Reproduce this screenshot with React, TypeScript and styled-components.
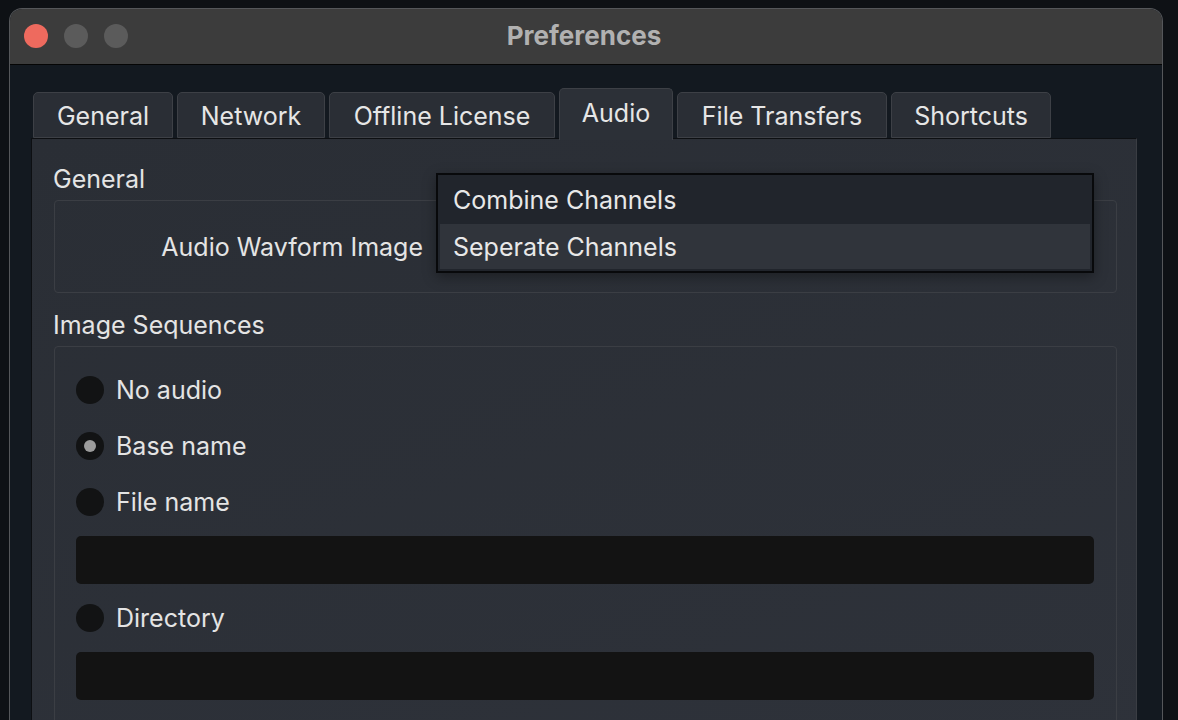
import styled, { createGlobalStyle } from "styled-components";

const GlobalStyle = createGlobalStyle`
  html, body {
    margin: 0;
    padding: 0;
    background: #0e1115;
    overflow: hidden;
  }
  body {
    font-family: Inter, "Liberation Sans", Arial, sans-serif;
    color: #e4e4e4;
  }
`;

const Window = styled.div`
  margin: 8px 0 0 9px;
  width: 1152px;
  height: 740px;
  border: 1px solid #55575a;
  border-bottom: none;
  border-radius: 13px 13px 0 0;
  background: #131920;
  overflow: hidden;
  display: flex;
  flex-direction: column;
`;

const TitleBar = styled.div`
  position: relative;
  height: 55px;
  flex: none;
  background: #3c3c3c;
  border-bottom: 1px solid #050505;
  display: flex;
  align-items: center;
  justify-content: center;
`;

const Lights = styled.div`
  position: absolute;
  left: 14px;
  top: 15px;
  display: flex;
  gap: 16px;
`;

const Light = styled.span<{ $color: string }>`
  width: 24px;
  height: 24px;
  border-radius: 50%;
  background: ${(p) => p.$color};
`;

const Title = styled.div`
  font-size: 26px;
  font-weight: 700;
  color: #b1b1b1;
  margin-left: -4px;
  margin-top: -3px;
`;

const Body = styled.div`
  padding: 23px 0 0 21px;
  display: flex;
  flex-direction: column;
`;

const TabBar = styled.div`
  display: flex;
  align-items: flex-end;
  gap: 4px;
  padding-left: 2px;
  position: relative;
  z-index: 1;
`;

const Tab = styled.div<{ $active?: boolean; $w: number }>`
  height: ${(p) => (p.$active ? 52 : 46)}px;
  margin-bottom: ${(p) => (p.$active ? -2 : 0)}px;
  width: ${(p) => p.$w}px;
  box-sizing: border-box;
  display: flex;
  align-items: center;
  justify-content: center;
  padding-top: ${(p) => (p.$active ? 0 : 2)}px;
  padding-bottom: ${(p) => (p.$active ? 4 : 0)}px;
  font-size: 25px;
  color: #e6e6e6;
  background: ${(p) => (p.$active ? "#2c3037" : "#2a2e35")};
  border: 1px solid #3d4046;
  border-bottom: ${(p) => (p.$active ? "none" : "1px solid #3d4046")};
  border-radius: 5px 5px 0 0;
`;

const Pane = styled.div`
  width: 1106px;
  height: 620px;
  box-sizing: border-box;
  background: linear-gradient(160deg, #2a2e35 0%, #2e323a 100%);
  border: 1px solid #0d0f12;
  border-right-color: #3a3d43;
  padding: 24px 19px 0 21px;
  display: flex;
  flex-direction: column;
`;

const SectionLabel = styled.div`
  font-size: 25px;
  line-height: 32px;
  color: #e4e4e4;
  margin-bottom: 5px;
`;

const Group = styled.div<{ $h?: number }>`
  position: relative;
  margin-left: 1px;
  height: ${(p) => (p.$h ? `${p.$h}px` : "auto")};
  box-sizing: border-box;
  border: 1px solid #3b3e44;
  border-radius: 4px;
  margin-bottom: 16px;
`;

const FormRow = styled.div`
  height: 100%;
  display: flex;
  align-items: center;
`;

const FieldLabel = styled.div`
  width: 368px;
  text-align: right;
  font-size: 25px;
  color: #e4e4e4;
`;

const Popup = styled.div`
  position: absolute;
  left: 381px;
  top: -28px;
  width: 658px;
  height: 100px;
  box-sizing: border-box;
  background: #21252c;
  border: 2px solid #08090b;
  padding: 2px;
  display: flex;
  flex-direction: column;
  gap: 2px;
  box-shadow: 0 4px 12px rgba(0, 0, 0, 0.35);
`;

const Option = styled.div<{ $hover?: boolean }>`
  flex: 1;
  display: flex;
  align-items: center;
  padding-left: 13px;
  font-size: 25px;
  color: #e8e8e8;
  background: ${(p) => (p.$hover ? "#30343b" : "#21252c")};
`;

const Options = styled.div`
  padding: 29px 22px 40px 21px;
  display: flex;
  flex-direction: column;
  gap: 20px;
`;

const RadioRow = styled.label`
  height: 28px;
  display: flex;
  align-items: center;
  gap: 12px;
  font-size: 25px;
  color: #e4e4e4;
  & + & {
    margin-top: 8px;
  }
`;

const Radio = styled.span<{ $checked?: boolean }>`
  width: 28px;
  height: 28px;
  flex: none;
  border-radius: 50%;
  background: #121314;
  display: flex;
  align-items: center;
  justify-content: center;
  &::after {
    content: "";
    width: 12px;
    height: 12px;
    border-radius: 50%;
    background: #9c9c9c;
    display: ${(p) => (p.$checked ? "block" : "none")};
  }
`;

const TextInput = styled.div`
  height: 48px;
  background: #131313;
  border-radius: 5px;
`;

const tabs = [
  { name: "General", w: 140 },
  { name: "Network", w: 148 },
  { name: "Offline License", w: 226 },
  { name: "Audio", w: 114, active: true },
  { name: "File Transfers", w: 210 },
  { name: "Shortcuts", w: 160 },
];

export default function App() {
  return (
    <>
      <GlobalStyle />
      <Window>
        <TitleBar>
          <Lights>
            <Light $color="#ee6a5e" />
            <Light $color="#5b5b5b" />
            <Light $color="#5b5b5b" />
          </Lights>
          <Title>Preferences</Title>
        </TitleBar>
        <Body>
          <TabBar>
            {tabs.map((t) => (
              <Tab key={t.name} $w={t.w} $active={t.active}>
                {t.name}
              </Tab>
            ))}
          </TabBar>
          <Pane>
            <SectionLabel>General</SectionLabel>
            <Group $h={93}>
              <FormRow>
                <FieldLabel>Audio Wavform Image</FieldLabel>
              </FormRow>
              <Popup>
                <Option>Combine Channels</Option>
                <Option $hover>Seperate Channels</Option>
              </Popup>
            </Group>
            <SectionLabel>Image Sequences</SectionLabel>
            <Group>
              <Options>
                <RadioRow>
                  <Radio />
                  No audio
                </RadioRow>
                <RadioRow>
                  <Radio $checked />
                  Base name
                </RadioRow>
                <RadioRow>
                  <Radio />
                  File name
                </RadioRow>
                <TextInput />
                <RadioRow>
                  <Radio />
                  Directory
                </RadioRow>
                <TextInput />
              </Options>
            </Group>
          </Pane>
        </Body>
      </Window>
    </>
  );
}
